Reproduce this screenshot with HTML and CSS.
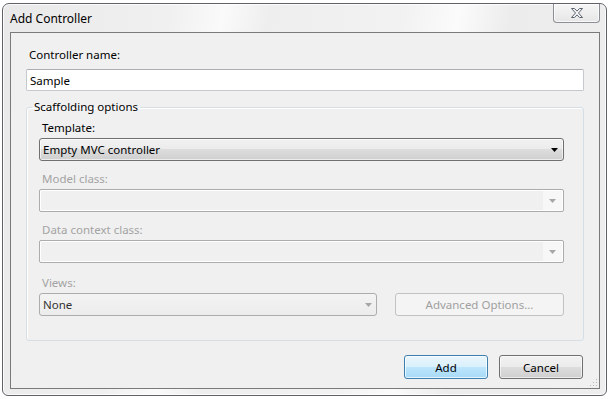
FILE: index.html
```html
<!DOCTYPE html>
<html lang="en">
<head>
  <meta charset="UTF-8">
  <title>Add Controller</title>
  <link rel="stylesheet" href="styles.css">
</head>
<body>
  <div class="window">
    <div class="titlebar">
      <span class="title">Add Controller</span>
      <div class="close-btn">
        <svg width="16" height="12" viewBox="0 0 16 12">
          <path d="M2.5 1.5h3l2.5 2.6 2.5-2.6h3l-4 4.5 4 4.5h-3l-2.5-2.6-2.5 2.6h-3l4-4.5z" fill="#f4f4f4" stroke="#5c6470" stroke-width="1" stroke-linejoin="round"/>
        </svg>
      </div>
    </div>
    <div class="client">
      <label class="lbl" for="ctrl-name">Controller name:</label>
      <input class="textbox" id="ctrl-name" type="text" value="Sample">

      <fieldset class="group">
        <legend>Scaffolding options</legend>

        <div class="field first">
          <div class="lbl">Template:</div>
          <div class="combo active">
            <span class="combo-text">Empty MVC controller</span>
            <svg class="arrow" width="7" height="4" viewBox="0 0 7 4"><path d="M0 0h7L3.5 4z" fill="#000"/></svg>
          </div>
        </div>

        <div class="field">
          <div class="lbl disabled">Model class:</div>
          <div class="combo off">
            <span class="combo-text"></span>
            <span class="drop"><svg class="arrow" width="7" height="4" viewBox="0 0 7 4"><path d="M0 0h7L3.5 4z" fill="#a6a6a6"/></svg></span>
          </div>
        </div>

        <div class="field">
          <div class="lbl disabled">Data context class:</div>
          <div class="combo off">
            <span class="combo-text"></span>
            <span class="drop"><svg class="arrow" width="7" height="4" viewBox="0 0 7 4"><path d="M0 0h7L3.5 4z" fill="#a6a6a6"/></svg></span>
          </div>
        </div>

        <div class="field views">
          <div class="lbl disabled">Views:</div>
          <div class="views-row">
            <div class="combo list">
              <span class="combo-text">None</span>
              <svg class="arrow" width="7" height="4" viewBox="0 0 7 4"><path d="M0 0h7L3.5 4z" fill="#a6a6a6"/></svg>
            </div>
            <button class="btn adv" disabled>Advanced Options...</button>
          </div>
        </div>
      </fieldset>

      <div class="actions">
        <button class="btn primary">Add</button>
        <button class="btn">Cancel</button>
      </div>

      <svg class="grip" width="9" height="9" viewBox="0 0 9 9">
        <g fill="#b9b9b9">
          <rect x="7" y="1" width="1" height="1"/>
          <rect x="4" y="4" width="1" height="1"/><rect x="7" y="4" width="1" height="1"/>
          <rect x="1" y="7" width="1" height="1"/><rect x="4" y="7" width="1" height="1"/><rect x="7" y="7" width="1" height="1"/>
        </g>
      </svg>
    </div>
  </div>
</body>
</html>
```

FILE: styles.css
```css
body {
  margin: 0;
  background: #ffffff;
  font-family: "Noto Sans", "DejaVu Sans", sans-serif;
  font-size: 11.5px;
  color: #000;
}
.window {
  margin: 3px 0 0 2px;
  width: 605px;
  height: 393px;
  box-sizing: border-box;
  border: 1px solid #5f6368;
  border-radius: 7px 7px 6px 6px;
  padding: 0 6px 6px 7px;
  display: flex;
  flex-direction: column;
  background: linear-gradient(100deg, #e9e9e9 0%, #f0f0f0 25%, #fafafa 33%, #eeeeee 40%, #f2f2f2 60%, #fbfbfb 68%, #ececec 76%, #eeeeee 100%);
  box-shadow: inset 0 0 0 1px rgba(255, 255, 255, 0.8);
}
.titlebar {
  height: 28px;
  display: flex;
  justify-content: space-between;
  align-items: flex-start;
  flex-shrink: 0;
}
.title {
  margin-top: 7px;
  line-height: 16px;
  font-size: 12px;
}
.close-btn {
  width: 45px;
  height: 18px;
  border: 1px solid #8c9096;
  border-top: none;
  border-radius: 0 0 4px 4px;
  background: linear-gradient(to bottom, #f6f6f6, #e6e6e6);
  box-shadow: inset 0 0 0 1px rgba(255, 255, 255, 0.7);
  display: flex;
  align-items: center;
  justify-content: center;
}
.client {
  position: relative;
  flex: 1;
  background: #f0f0f0;
  border: 1px solid #7a7a7a;
  padding: 14px 15px 0 15px;
}
.lbl {
  display: block;
  line-height: 16px;
  padding-left: 3px;
}
.lbl.disabled {
  color: #a3a3a3;
}
.textbox {
  display: block;
  box-sizing: border-box;
  width: 558px;
  height: 22px;
  margin: 6px 0 0 0;
  padding: 0 3px;
  font: inherit;
  color: #000;
  background: #fff;
  border: 1px solid #c5c8cc;
  border-top-color: #abadb3;
  border-radius: 2px;
  outline: none;
}
.group {
  margin: 8px 0 0 0;
  padding: 0 19px 24px 12px;
  border: 1px solid #d5dfe5;
  border-radius: 3px;
  box-shadow: inset 1px 1px 0 #fff;
}
.group legend {
  margin-left: -7px;
  padding: 0 2px;
  line-height: 16px;
}
.field {
  margin-top: 10px;
}
.field.first {
  margin-top: 5px;
}
.field.views {
  margin-top: 12px;
}
.field .lbl {
  margin-bottom: 2px;
}
.combo {
  box-sizing: border-box;
  height: 23px;
  display: flex;
  align-items: center;
  border-radius: 3px;
}
.combo-text {
  flex: 1;
  padding-left: 3px;
}
.combo .arrow {
  margin-right: 5px;
}
.combo.active {
  border: 1px solid #707070;
  background: linear-gradient(to bottom, #f2f2f2 0%, #ebebeb 50%, #dddddd 50%, #cfcfcf 100%);
  box-shadow: inset 0 0 0 1px rgba(255, 255, 255, 0.6);
}
.combo.off {
  border: 1px solid #acacac;
  border-radius: 2px;
  background: #f0f0f0;
  box-shadow: inset -1px -1px 0 #fff, inset 1px 1px 0 #fff;
  align-items: stretch;
}
.combo.off .drop {
  width: 19px;
  margin: 1px 1px 1px 0;
  background: #f7f7f7;
  display: flex;
  align-items: center;
  justify-content: center;
}
.combo.off .drop .arrow {
  margin: 0;
}
.views-row {
  display: flex;
  gap: 18px;
}
.combo.list {
  width: 338px;
  border: 1px solid #acacac;
  background: linear-gradient(to bottom, #f3f3f3, #ececec);
  color: #333;
}
.combo.list .arrow {
  margin-right: 4px;
}
.btn {
  box-sizing: border-box;
  height: 24px;
  padding: 0;
  font: inherit;
  color: #000;
  border: 1px solid #707070;
  border-radius: 3px;
  background: linear-gradient(to bottom, #f2f2f2 0%, #ebebeb 50%, #dddddd 50%, #cfcfcf 100%);
  box-shadow: inset 0 0 0 1px rgba(255, 255, 255, 0.6);
}
.btn.adv {
  width: 169px;
  height: 23px;
  color: #a0a0a0;
  border-color: #c2c2c2;
  background: #f4f4f4;
  box-shadow: none;
}
.btn.primary {
  border-color: #3c7fb1;
  background: linear-gradient(to bottom, #eaf6fd 0%, #d9f0fc 50%, #bee6fd 50%, #a7d9f5 100%);
  box-shadow: inset 0 0 0 1px rgba(255, 255, 255, 0.7);
}
.actions {
  display: flex;
  justify-content: flex-end;
  gap: 11px;
  margin: 14px 1px 0 0;
}
.actions .btn {
  width: 84px;
}
.grip {
  position: absolute;
  right: 1px;
  bottom: 1px;
}
```
